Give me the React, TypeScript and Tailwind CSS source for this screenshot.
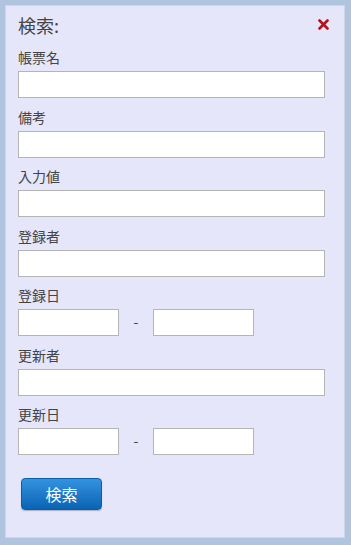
const font = { fontFamily: '"Noto Sans CJK JP", "Liberation Sans", sans-serif' };

function Field({ label, children }: { label: string; children: React.ReactNode }) {
  return (
    <div className="mb-[8.5px]">
      <div className="h-[20px] leading-[20px] text-[14px] text-[#444] mb-[4px]">{label}</div>
      {children}
    </div>
  );
}

function TextBox({ className = "w-[307px]" }: { className?: string }) {
  return (
    <input
      type="text"
      className={`${className} h-[27px] bg-white border border-[#b5b5b5] outline-none px-1 text-[13px]`}
    />
  );
}

function DateRange() {
  return (
    <div className="flex items-center">
      <TextBox className="w-[101px]" />
      <span className="w-[34px] text-center text-[14px] text-[#444] -mt-[3px]">-</span>
      <TextBox className="w-[101px]" />
    </div>
  );
}

export default function App() {
  return (
    <div
      className="w-[351px] h-[545px] bg-[#b0c4de] pl-[5px] pt-[5px] pr-[6px] pb-[7px]"
      style={font}
    >
      <div className="h-full bg-[#e6e6fa] border border-[#cdd6ea] pl-[12px] pt-[7px]">
        {/* Header */}
        <div className="flex items-start justify-between h-[24px] mb-[10px] pr-[15px]">
          <h2 className="text-[18px] leading-[24px] text-[#444]">検索:</h2>
          <button type="button" className="mt-[5px] w-[12px] h-[12px] flex items-center justify-center">
            <svg width="11" height="11" viewBox="0 0 11 11">
              <line x1="1.5" y1="1.5" x2="9.5" y2="9.5" stroke="#b3121a" strokeWidth="2.6" strokeLinecap="round" />
              <line x1="9.5" y1="1.5" x2="1.5" y2="9.5" stroke="#b3121a" strokeWidth="2.6" strokeLinecap="round" />
            </svg>
          </button>
        </div>

        <Field label="帳票名"><TextBox /></Field>
        <Field label="備考"><TextBox /></Field>
        <Field label="入力値"><TextBox /></Field>
        <Field label="登録者"><TextBox /></Field>
        <Field label="登録日"><DateRange /></Field>
        <Field label="更新者"><TextBox /></Field>
        <Field label="更新日"><DateRange /></Field>

        <button
          type="button"
          className="mt-[14px] ml-[3px] w-[81px] h-[32px] rounded-[4px] border border-[#0b5fa8] bg-gradient-to-b from-[#3393e0] to-[#0764b4] text-white text-[16px] shadow-[0_1px_1px_rgba(0,0,0,0.25)]"
        >
          検索
        </button>
      </div>
    </div>
  );
}
